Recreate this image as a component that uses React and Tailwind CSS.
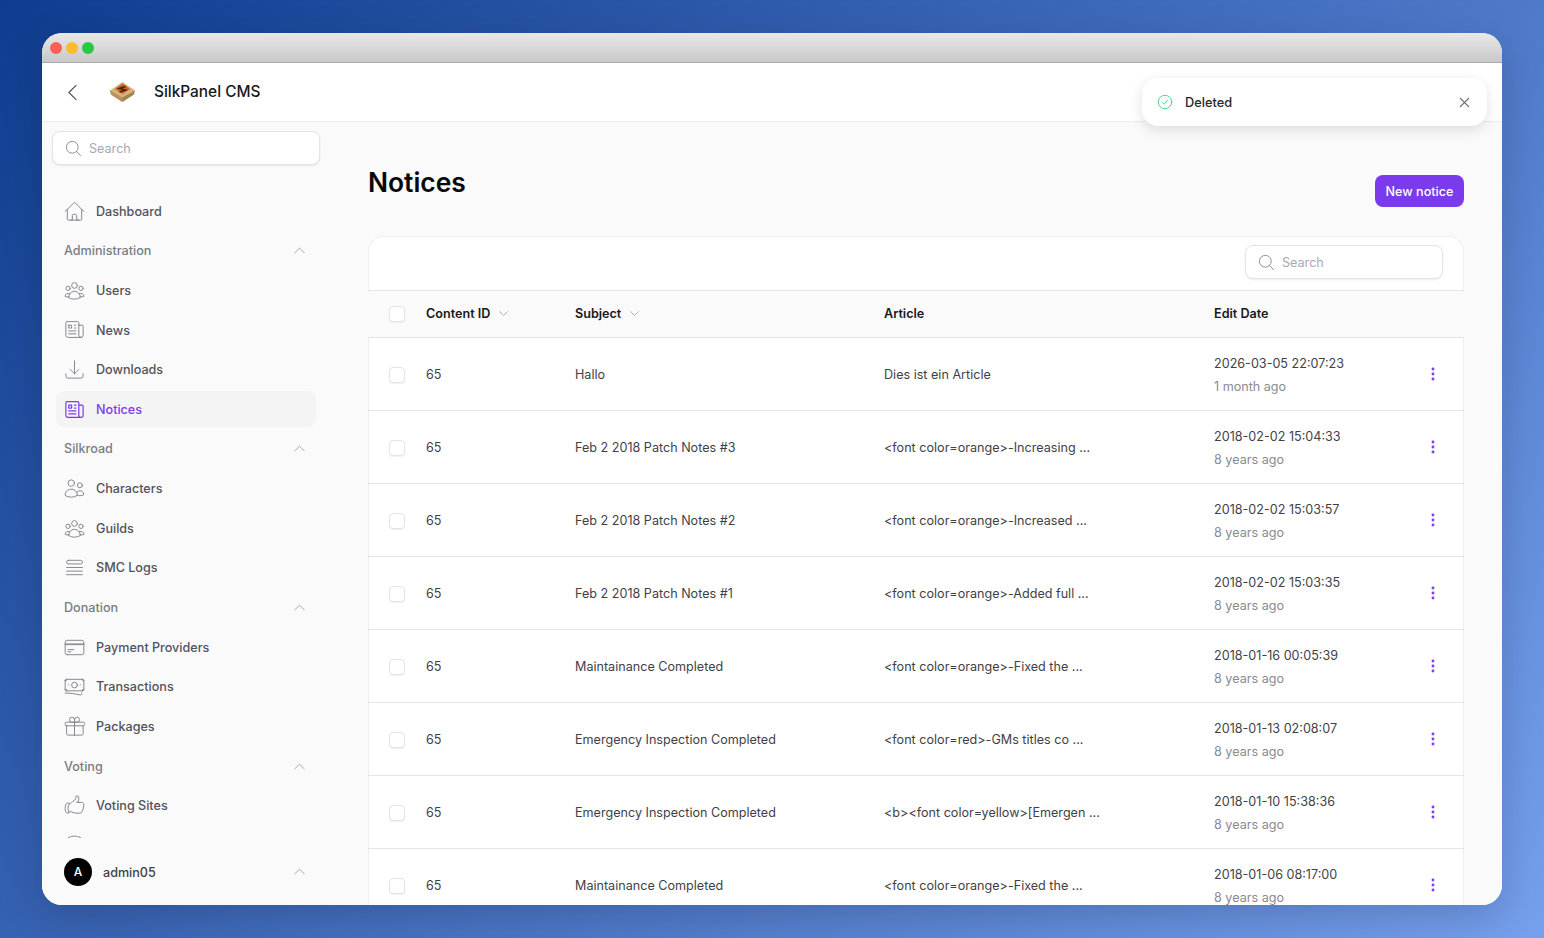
import {
  HiOutlineHome,
  HiOutlineUserGroup,
  HiOutlineNewspaper,
  HiOutlineArrowDownTray,
  HiOutlineUsers,
  HiOutlineQueueList,
  HiOutlineCreditCard,
  HiOutlineBanknotes,
  HiOutlineGift,
  HiOutlineHandThumbUp,
  HiOutlineCircleStack,
  HiOutlineMagnifyingGlass,
  HiOutlineChevronUp,
  HiOutlineChevronDown,
  HiOutlineChevronLeft,
  HiOutlineCheckCircle,
  HiOutlineXMark,
  HiOutlineEllipsisVertical,
} from 'react-icons/hi2';

const nav = [
  { label: 'Dashboard', icon: HiOutlineHome },
  { section: 'Administration' },
  { label: 'Users', icon: HiOutlineUserGroup },
  { label: 'News', icon: HiOutlineNewspaper },
  { label: 'Downloads', icon: HiOutlineArrowDownTray },
  { label: 'Notices', icon: HiOutlineNewspaper, active: true },
  { section: 'Silkroad' },
  { label: 'Characters', icon: HiOutlineUsers },
  { label: 'Guilds', icon: HiOutlineUserGroup },
  { label: 'SMC Logs', icon: HiOutlineQueueList },
  { section: 'Donation' },
  { label: 'Payment Providers', icon: HiOutlineCreditCard },
  { label: 'Transactions', icon: HiOutlineBanknotes },
  { label: 'Packages', icon: HiOutlineGift },
  { section: 'Voting' },
  { label: 'Voting Sites', icon: HiOutlineHandThumbUp },
  { label: '', icon: HiOutlineCircleStack },
];

const notices = [
  { subject: 'Hallo', article: 'Dies ist ein Article', date: '2026-03-05 22:07:23', ago: '1 month ago' },
  { subject: 'Feb 2 2018 Patch Notes #3', article: '<font color=orange>-Increasing ...', date: '2018-02-02 15:04:33', ago: '8 years ago' },
  { subject: 'Feb 2 2018 Patch Notes #2', article: '<font color=orange>-Increased ...', date: '2018-02-02 15:03:57', ago: '8 years ago' },
  { subject: 'Feb 2 2018 Patch Notes #1', article: '<font color=orange>-Added full ...', date: '2018-02-02 15:03:35', ago: '8 years ago' },
  { subject: 'Maintainance Completed', article: '<font color=orange>-Fixed the ...', date: '2018-01-16 00:05:39', ago: '8 years ago' },
  { subject: 'Emergency Inspection Completed', article: '<font color=red>-GMs titles co ...', date: '2018-01-13 02:08:07', ago: '8 years ago' },
  { subject: 'Emergency Inspection Completed', article: '<b><font color=yellow>[Emergen ...', date: '2018-01-10 15:38:36', ago: '8 years ago' },
  { subject: 'Maintainance Completed', article: '<font color=orange>-Fixed the ...', date: '2018-01-06 08:17:00', ago: '8 years ago' },
];

const cols = 'grid grid-cols-[37px_149px_309px_330px_209px_20px] items-center pl-[21px] pr-[21px]';

function Logo() {
  return (
    <svg width="27" height="22" viewBox="0 0 27 22" className="shrink-0">
      <path d="M13.5 21 L2 13.5 L1 9 L13.5 16 L26 9 L25 13.5 Z" fill="#a5824f" />
      <path d="M13.5 16 L13.5 21 L2 13.5 L1 9 Z" fill="#b8935c" />
      <path d="M13.5 1 L1 9.5 L13.5 16.5 L26 9.5 Z" fill="#d3b27f" />
      <path d="M13.5 2.5 L6 8 L13.5 13 L21 8 Z" fill="#d4601f" />
      <path d="M16.5 5.5 L10.5 7.5 L16.5 9 L10.5 11" fill="none" stroke="#43260f" strokeWidth="1.5" />
    </svg>
  );
}

function SearchBox({ className }) {
  return (
    <div className={`flex h-[34px] items-center gap-[6px] rounded-lg border border-[#e4e4e7] bg-white pl-[11px] shadow-[0_1px_2px_rgba(0,0,0,0.08)] ${className}`}>
      <HiOutlineMagnifyingGlass size={19} strokeWidth={1.25} className="text-[#8f8f99]" />
      <span className="pt-[2px] text-[12.6px] text-[#a9a9b2]">Search</span>
    </div>
  );
}

function Checkbox() {
  return <div className="h-4 w-4 rounded border border-[#e4e4e7] bg-white shadow-[0_1px_1px_rgba(0,0,0,0.06)]" />;
}

function SectionRow({ label }) {
  return (
    <div className="flex h-9 shrink-0 items-center justify-between pl-2 pr-[9px] text-[12.6px] font-medium text-[#7b7b85]">
      <span className="pt-[2px]">{label}</span>
      <HiOutlineChevronUp size={15} strokeWidth={1.5} className="text-[#a1a1aa]" />
    </div>
  );
}

function NavRow({ item }) {
  const Icon = item.icon;
  return (
    <div className={`flex h-9 shrink-0 items-center gap-[10px] rounded-lg pl-[7px] text-[12.6px] font-medium ${item.active ? 'bg-[#f4f4f5] text-[#7c3aed]' : 'text-[#52525b]'}`}>
      <Icon size={23} strokeWidth={item.active ? 1.25 : 1} className={item.active ? 'text-[#7c3aed]' : 'text-[#84848e]'} />
      <span className="pt-[2px]">{item.label}</span>
    </div>
  );
}

export default function App() {
  return (
    <div className="h-[938px] overflow-hidden bg-[linear-gradient(135deg,#0f3c8f_0%,#76a0ee_100%)] px-[42px] pt-[33px] font-['Inter',sans-serif]">
      <div className="relative flex h-[872px] flex-col overflow-hidden rounded-[20px] bg-white shadow-[0_12px_40px_rgba(0,0,0,0.18)]">
        <div className="flex h-[30px] shrink-0 items-center gap-1 border-b border-[#a9a9a9] bg-gradient-to-b from-[#e8e8e8] to-[#c9c9c9] pl-2">
          <span className="h-3 w-3 rounded-full bg-[#ff5f57]" />
          <span className="h-3 w-3 rounded-full bg-[#febc2e]" />
          <span className="h-3 w-3 rounded-full bg-[#28c840]" />
        </div>

        <header className="flex h-[59px] shrink-0 items-center border-b border-[#ececee] bg-white pl-[19px]">
          <HiOutlineChevronLeft size={23} strokeWidth={1.25} className="text-[#52525b]" />
          <div className="ml-[25px] flex items-center gap-[18px]">
            <Logo />
            <span className="text-[15.4px] font-medium text-[#18181b]">SilkPanel CMS</span>
          </div>
        </header>

        <div className="flex min-h-0 flex-1 bg-[#fafafa]">
          <aside className="flex w-[288px] shrink-0 flex-col pl-[10px] pr-[10px]">
            <SearchBox className="mt-[9px] shrink-0" />
            <nav className="mx-1 mt-7 flex min-h-0 flex-1 flex-col gap-[3.67px] overflow-hidden">
              {nav.map((item, i) =>
                item.section ? <SectionRow key={i} label={item.section} /> : <NavRow key={i} item={item} />
              )}
            </nav>
            <div className="flex h-[67px] shrink-0 items-center gap-[11px] pl-3 pr-[13px]">
              <div className="flex h-[28px] w-[28px] items-center justify-center rounded-full bg-black text-xs font-medium text-white">A</div>
              <span className="flex-1 pt-[3px] text-[12.6px] font-medium text-[#3f3f46]">admin05</span>
              <HiOutlineChevronUp size={15} strokeWidth={1.5} className="text-[#a1a1aa]" />
            </div>
          </aside>

          <main className="min-w-0 flex-1 overflow-hidden px-[38px] pt-[42px]">
            <div className="flex items-start justify-between">
              <h1 className="text-[26.4px] font-semibold leading-9 text-[#09090b]">Notices</h1>
              <button className="mt-[11px] h-8 w-[89px] rounded-lg bg-[#7c3aed] pt-[2px] text-[12.6px] font-medium text-white">New notice</button>
            </div>

            <div className="mt-[29px] rounded-t-2xl bg-white shadow-[inset_0_0_0_1px_#efeff1]">
              <div className="flex h-[54px] items-start justify-end pr-[21px] pt-[9px]">
                <SearchBox className="w-[198px]" />
              </div>

              <div className={`${cols} h-[48px] border-y border-[#e4e4e7] bg-[#fafafa] text-[12.6px] font-semibold text-[#18181b]`}>
                <Checkbox />
                <div className="flex items-center gap-[7px]">Content ID <HiOutlineChevronDown size={13} className="text-[#a1a1aa]" /></div>
                <div className="flex items-center gap-[7px]">Subject <HiOutlineChevronDown size={13} className="text-[#a1a1aa]" /></div>
                <div>Article</div>
                <div>Edit Date</div>
                <div />
              </div>

              {notices.map((n, i) => (
                <div key={i} className={`${cols} h-[73px] border-b border-[#e4e4e7] text-[12.6px] text-[#3f3f46]`}>
                  <div className="mt-px"><Checkbox /></div>
                  <div className="pt-[2px]">65</div>
                  <div className="pt-[2px]">{n.subject}</div>
                  <div className="pt-[2px]">{n.article}</div>
                  <div className="pt-[2px] leading-[23.5px]">
                    <div>{n.date}</div>
                    <div className="text-[#8a8a93]">{n.ago}</div>
                  </div>
                  <HiOutlineEllipsisVertical size={20} strokeWidth={2} className="text-[#7c3aed]" />
                </div>
              ))}
            </div>
          </main>
        </div>

        <div className="absolute left-[1100px] top-[45px] flex h-12 w-[345px] items-center rounded-2xl bg-white pl-[14px] pr-[14px] shadow-[0_4px_14px_rgba(0,0,0,0.12)]">
          <HiOutlineCheckCircle size={18} strokeWidth={1.25} className="text-[#34d77f]" />
          <span className="ml-[11px] flex-1 pt-px text-[12.8px] font-medium text-[#27272a]">Deleted</span>
          <HiOutlineXMark size={17} strokeWidth={1.5} className="text-[#71717a]" />
        </div>
      </div>
    </div>
  );
}
